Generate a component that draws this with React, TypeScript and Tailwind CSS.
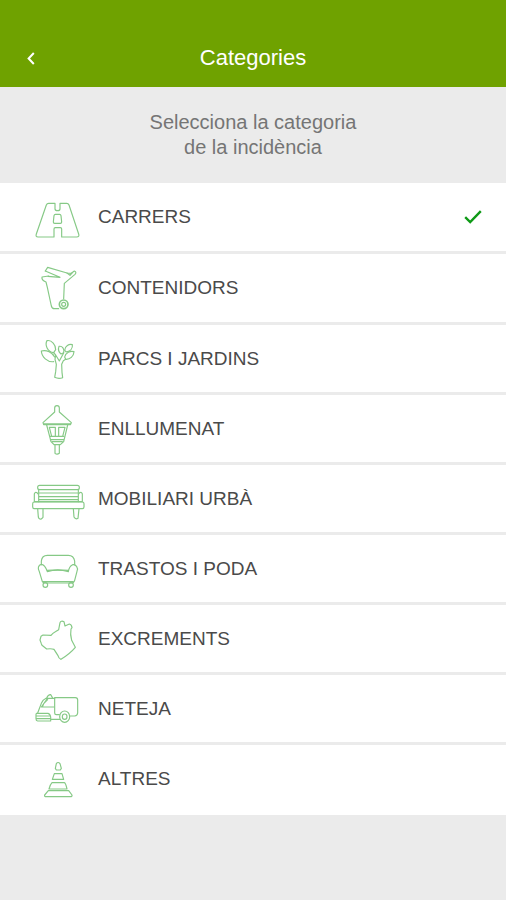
import { useState } from "react";
import type { ReactNode } from "react";

type Category = {
  id: string;
  label: string;
  viewBox: string;
  icon: ReactNode;
  height: string;
};

const categories: Category[] = [
  {
    id: "carrers",
    label: "CARRERS",
    height: "h-[71px]",
    viewBox: "24 -9 180 180",
    icon: (
      <>
        <path d="M86 40H105V56Q105 62 113 62Q120 62 120 56V40H140Q145 40 147 45L176 132Q179 141 170 141H125V117Q125 113 121 113H106Q102 113 102 117V141H54Q46 141 49 132L79 45Q81 40 86 40Z" />
        <path d="M106 73H119Q122 73 123 77L125 96Q125 100 121 100H104Q100 100 100 96L102 77Q103 73 106 73Z" />
      </>
    ),
  },
  {
    id: "contenidors",
    label: "CONTENIDORS",
    height: "h-[71px]",
    viewBox: "24 0 180 180",
    icon: (
      <>
        <path d="M86 54L66 57Q64 67 78 72L82 88L94 144Q96 152 103 152H116" />
        <path d="M76 39L83 28L141 45L154 46L163 39Q171 42 165 49L133 76L131 122" />
        <path d="M76 39L90 45L120 58L84 55M141 45L150 52L156 45" />
        <circle cx="131" cy="139" r="13" strokeWidth="5" />
        <circle cx="131" cy="139" r="6" />
      </>
    ),
  },
  {
    id: "parcs",
    label: "PARCS I JARDINS",
    height: "h-[70px]",
    viewBox: "24 0 180 180",
    icon: (
      <>
        <path d="M101 71C82 69 74 47 81 35C95 32 108 48 107 62L101 71Z" />
        <path d="M101 98C82 100 65 84 64 66C80 61 97 71 104 84" />
        <path d="M134 64C135 51 147 44 157 47C159 59 150 67 139 69L134 64Z" />
        <path d="M134 84C137 70 151 65 162 68C161 82 150 92 137 91L134 84Z" />
        <path d="M117 52C127 50 134 60 131 71L123 75C116 69 114 60 117 52Z" />
        <path d="M101 71L107 78L105 91L109 106L107 128L104 145Q116 151 128 146L126 130L125 106L130 95L137 91M107 78L118 96L131 72" />
      </>
    ),
  },
  {
    id: "enllumenat",
    label: "ENLLUMENAT",
    height: "h-[70px]",
    viewBox: "24 0 180 180",
    icon: (
      <>
        <path d="M104 39V27Q104 20 111 20Q118 20 118 27V39L154 71L151 77H71L69 71L104 39Z" />
        <path d="M72 75H151" strokeWidth="5" />
        <path d="M80 78L93 128L102 137H121L131 128L143 78M88 85H106V112H95L88 85ZM116 85H135L128 112H116V85M91 112H131M91 122H131M97 128H127M105 137V163Q111 168 118 163V137" />
      </>
    ),
  },
  {
    id: "mobiliari",
    label: "MOBILIARI URBÀ",
    height: "h-[70px]",
    viewBox: "24 -6 180 180",
    icon: (
      <>
        <rect x="53" y="43" width="125" height="13" rx="6" />
        <path d="M56 57V92M175 57V92M56 66H175M56 77H175M56 86H175" />
        <path d="M54 92H43V69Q45 62 51 65L54 69M178 92H187V69Q185 62 179 65L176 69M54 92H178" />
        <rect x="38" y="93" width="154" height="20" rx="5" />
        <path d="M53 113L55 138Q57 146 64 144L69 139V113M160 113L162 138Q166 146 174 142L177 113" />
      </>
    ),
  },
  {
    id: "trastos",
    label: "TRASTOS I PODA",
    height: "h-[70px]",
    viewBox: "24 -6 180 180",
    icon: (
      <>
        <path d="M64 71V60Q66 43 82 43H145Q161 43 164 60V71" />
        <path d="M82 92C78 80 74 70 64 70C55 71 52 83 58 92L67 122Q70 126 78 126H154Q162 126 164 118L171 91C176 80 167 69 158 71C151 74 146 85 145 92Q113 83 82 92Z" />
        <path d="M82 88Q113 85 145 88M68 122H160" />
        <circle cx="76" cy="132" r="7" />
        <circle cx="153" cy="132" r="7" />
      </>
    ),
  },
  {
    id: "excrements",
    label: "EXCREMENTS",
    height: "h-[70px]",
    viewBox: "24 0 180 180",
    icon: (
      <path d="M69 78L93 79Q98 72 106 68L116 62L120 41Q123 34 132 38L135 51L148 45Q155 46 156 56L153 60Q150 76 155 94L166 115Q151 133 123 151Q116 149 114 140L102 121Q94 118 80 120L66 109L64 104L60 93L63 82L69 78Z" />
    ),
  },
  {
    id: "neteja",
    label: "NETEJA",
    height: "h-[70px]",
    viewBox: "24 -6 180 180",
    icon: (
      <>
        <path d="M104 50H166Q173 50 173 57V96Q172 104 164 105H150M104 50V96Q104 101 109 101H118" />
        <path d="M104 52H78Q69 56 64 67L53 96M80 51Q85 40 92 41L98 51M82 53L64 78H102M67 78L71 68L83 56" />
        <path d="M50 97H84Q91 99 92 108L92 120H53Q48 119 48 113V101Q48 98 50 97ZM49 105H91M49 113H91M92 115H119" />
        <ellipse cx="134" cy="107" rx="15" ry="17" />
        <ellipse cx="134" cy="107" rx="7" ry="8" />
      </>
    ),
  },
  {
    id: "altres",
    label: "ALTRES",
    height: "h-[70px]",
    viewBox: "24 9 180 180",
    icon: (
      <>
        <path d="M109 72L106 67L109 53Q114 46 120 53L124 67L121 72H109Z" />
        <path d="M103 83H126L131 100H97L103 83Z" />
        <path d="M96 110H133Q137 111 141 129H87Q90 116 96 110Z" />
        <path d="M85 134H146L156 147Q157 152 151 152H79Q72 152 74 147L85 134Z" />
      </>
    ),
  },
];

function CategoryRow({
  category,
  selected,
  onSelect,
}: {
  category: Category;
  selected: boolean;
  onSelect: () => void;
}) {
  return (
    <label
      className={`${category.height} flex cursor-pointer items-center gap-[10px] border-b-[3px] border-[#ebebeb] bg-white pr-6 pl-7 last:border-white`}
    >
      <input
        type="radio"
        name="category"
        value={category.id}
        checked={selected}
        onChange={onSelect}
        className="peer sr-only"
      />
      <svg
        viewBox={category.viewBox}
        className="size-[60px] shrink-0 fill-none stroke-[#86c986]"
        strokeWidth="3.5"
        strokeLinejoin="round"
        strokeLinecap="round"
        aria-hidden="true"
      >
        {category.icon}
      </svg>
      <span className="flex-1 text-[19px] leading-6 text-[#4a4a4a]">{category.label}</span>
      {selected && (
        <svg
          viewBox="0 0 18 14"
          className="h-[14px] w-[18px] shrink-0 fill-none stroke-[#0f9a17]"
          strokeWidth="2.4"
          aria-hidden="true"
        >
          <path d="M1.2 7.2L6.2 12L16.8 1.2" />
        </svg>
      )}
    </label>
  );
}

export default function App() {
  const [selected, setSelected] = useState("carrers");

  return (
    <div className="min-h-screen bg-[#ebebeb] font-['Liberation_Sans',Arial,sans-serif]">
      <header className="grid h-[87px] grid-cols-[1fr_auto_1fr] items-center bg-[#6fa200] px-[19px] pt-[29px]">
        <button
          type="button"
          aria-label="Enrere"
          className="flex size-6 items-center justify-center justify-self-start"
        >
          <svg
            viewBox="0 0 8 13"
            className="h-[13px] w-2 fill-none stroke-white"
            strokeWidth="2"
            aria-hidden="true"
          >
            <path d="M6.8 1L1.6 6.5L6.8 12" />
          </svg>
        </button>
        <h1 className="text-[22px] leading-7 text-white">Categories</h1>
      </header>
      <main>
        <p className="px-6 pt-[23px] pb-[23px] text-center text-[20px] leading-[25px] text-[#757575]">
          Selecciona la categoria
          <br />
          de la incidència
        </p>
        <div role="radiogroup" aria-label="Categories">
          {categories.map((category) => (
            <CategoryRow
              key={category.id}
              category={category}
              selected={category.id === selected}
              onSelect={() => setSelected(category.id)}
            />
          ))}
        </div>
      </main>
    </div>
  );
}
